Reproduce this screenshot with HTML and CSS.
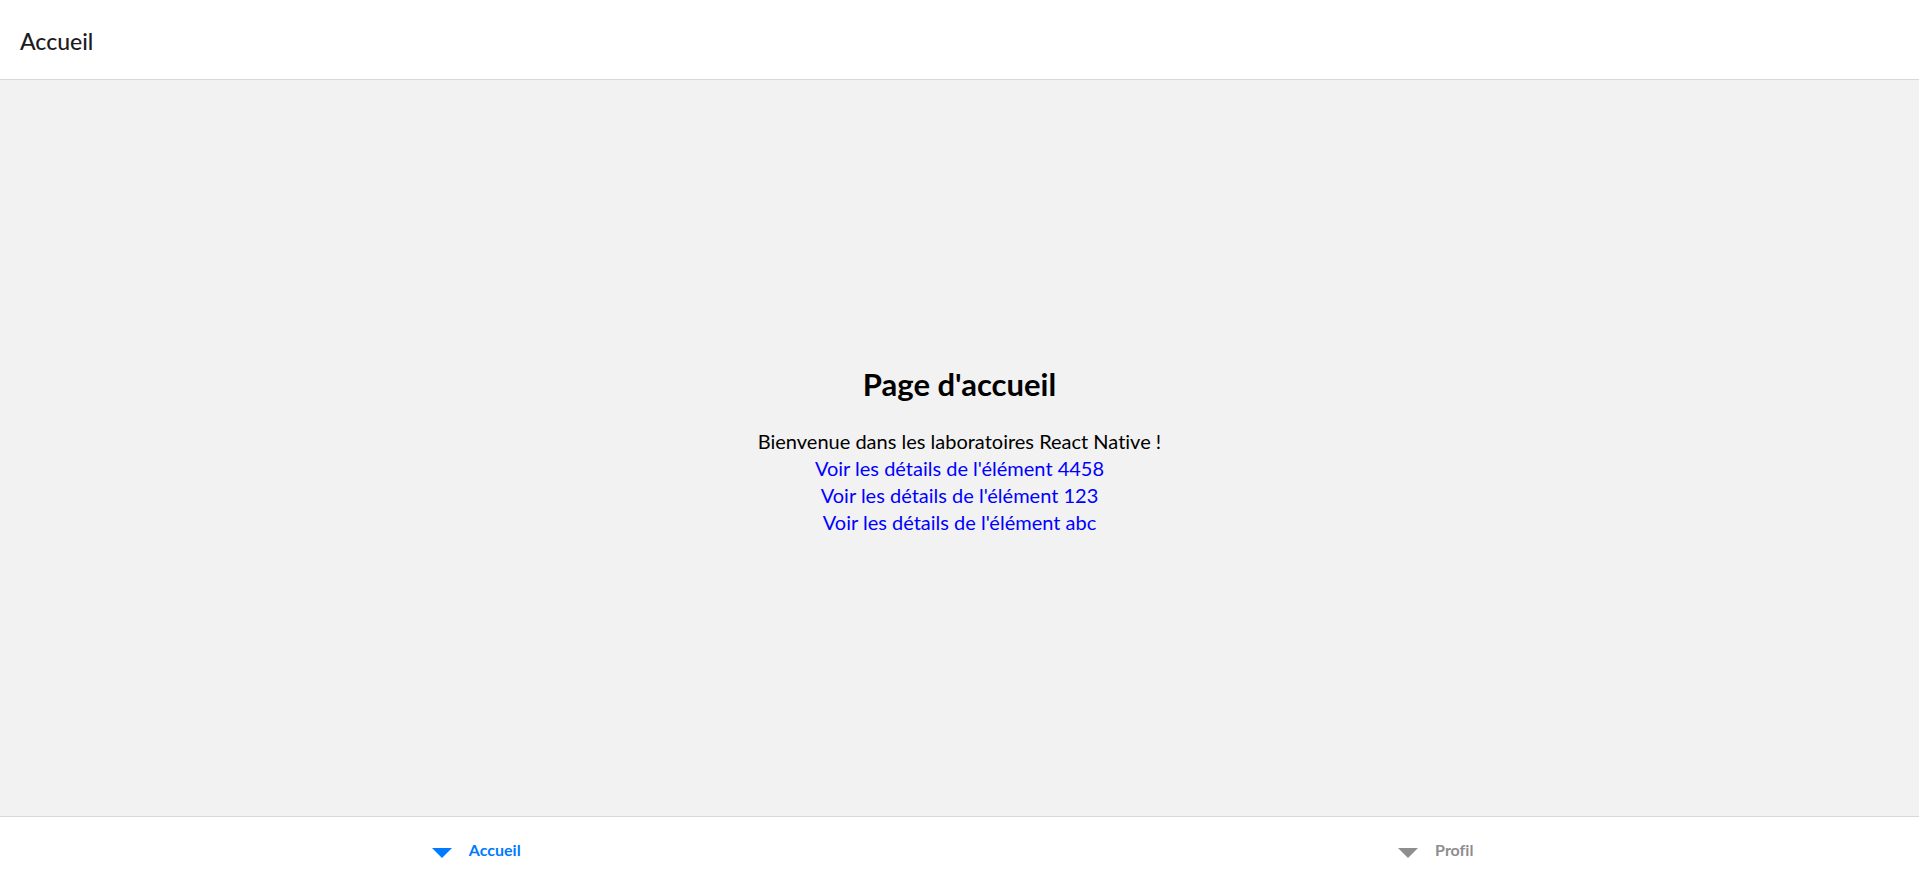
FILE: index.html
```html
<!DOCTYPE html>
<html lang="fr">
<head>
<meta charset="utf-8">
<title>Accueil</title>
<link rel="stylesheet" href="styles.css">
</head>
<body>
<div class="app">
  <header class="header">
    <h1 class="header-title">Accueil</h1>
  </header>
  <main class="content">
    <div class="home">
      <h2 class="home-title">Page d'accueil</h2>
      <p class="line">Bienvenue dans les laboratoires React Native !</p>
      <a class="line link" href="#">Voir les détails de l'élément 4458</a>
      <a class="line link" href="#">Voir les détails de l'élément 123</a>
      <a class="line link" href="#">Voir les détails de l'élément abc</a>
    </div>
  </main>
  <nav class="tabbar">
    <a class="tab tab-active" href="#">
      <span class="tab-icon"><svg width="20" height="10" viewBox="0 0 20 10"><polygon points="0,0 20,0 10,10" fill="currentColor"/></svg></span>
      <span class="tab-label">Accueil</span>
    </a>
    <a class="tab" href="#">
      <span class="tab-icon"><svg width="20" height="10" viewBox="0 0 20 10"><polygon points="0,0 20,0 10,10" fill="currentColor"/></svg></span>
      <span class="tab-label">Profil</span>
    </a>
  </nav>
</div>
</body>
</html>
```
FILE: styles.css
```css
* { box-sizing: border-box; }
html, body { margin: 0; padding: 0; height: 100%; }
body {
  font-family: "Lato", "Liberation Sans", sans-serif;
  font-variant-ligatures: none;
  background: #f2f2f2;
}
.app {
  display: flex;
  flex-direction: column;
  height: 872px;
}
.header {
  height: 80px;
  flex: none;
  background: #fff;
  border-bottom: 1px solid #d8d8d8;
  display: flex;
  align-items: center;
  padding: 2px 16px 0 20px;
}
.header-title {
  margin: 0;
  font-size: 23px;
  font-weight: 500;
  color: #1c1c1e;
}
.content {
  flex: 1;
  display: flex;
  align-items: center;
  justify-content: center;
}
.home {
  display: flex;
  flex-direction: column;
  align-items: center;
  padding-top: 4px;
}
.home-title {
  margin: 0 0 25px;
  font-size: 31px;
  font-weight: 700;
  color: #000;
  line-height: 38px;
}
.line {
  margin: 0;
  font-size: 20px;
  line-height: 27px;
  color: #000;
  text-decoration: none;
}
.link { color: #0000ff; }
.tabbar {
  height: 56px;
  flex: none;
  background: #fff;
  border-top: 1px solid #d8d8d8;
  display: flex;
}
.tab {
  flex: 1;
  display: flex;
  align-items: center;
  justify-content: center;
  text-decoration: none;
  color: #8e8e8f;
  padding: 10px 7px 0 0;
}
.tab-active { color: #007aff; }
.tab-icon {
  display: flex;
  width: 20px;
  height: 10px;
  margin-top: 6px;
}
.tab-label {
  margin-left: 17px;
  font-size: 16px;
  font-weight: 700;
}
```
